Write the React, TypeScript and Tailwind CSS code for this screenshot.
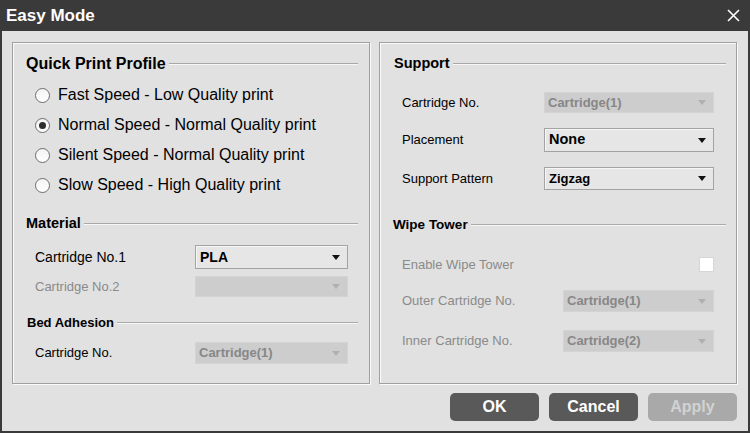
import React from "react";

const font = { fontFamily: '"Liberation Sans", Arial, sans-serif' };

function Arrow({ disabled }: { disabled?: boolean }) {
	return (
		<svg width="8" height="5" viewBox="0 0 8 5" className="shrink-0">
			<path d="M0 0 L8 0 L4 5 Z" fill={disabled ? "#b0b0b0" : "#111"} />
		</svg>
	);
}

function Select({ value, disabled, w, h, size = "text-[13px]" }: { value: string; disabled?: boolean; w: string; h: string; size?: string }) {
	if (disabled) {
		return (
			<div className={`${w} ${h} flex items-center justify-between bg-[#cdcdcd] pl-[4px] pr-[8px] shadow-[inset_0_0_0_1px_#d3d3d3]`}>
				<span className={`${size} font-bold text-[#878787]`}>{value}</span>
				<Arrow disabled />
			</div>
		);
	}
	return (
		<div className={`${w} ${h} flex items-center justify-between bg-[#e6e6e6] border border-[#a3a3a3] shadow-[inset_1px_1px_0_#f6f6f6] pl-[4px] pr-[7px]`}>
			<span className={`${size} font-bold text-black`}>{value}</span>
			<Arrow />
		</div>
	);
}

function Header({ title, size, pl }: { title: string; size: string; pl: string }) {
	return (
		<div className={`flex items-center h-[20px] ${pl}`}>
			<span className={`${size} font-bold text-black pr-[3px]`}>{title}</span>
			<div className="flex-1 h-0 border-t border-[#a9a9a9] border-b border-b-[#f7f7f7]" />
		</div>
	);
}

function Radio({ label, checked }: { label: string; checked?: boolean }) {
	return (
		<div className="flex items-center h-[30px] pl-[22px]">
			<div className="w-[15px] h-[15px] rounded-full border border-[#6d6d6d] bg-gradient-to-b from-[#f4f4f4] to-white flex items-center justify-center">
				{checked && <div className="w-[7px] h-[7px] rounded-full bg-[#2e2e2e]" />}
			</div>
			<span className="ml-[8px] text-[16px] text-black">{label}</span>
		</div>
	);
}

function Panel({ children }: { children: React.ReactNode }) {
	return <div className="w-[358px] h-[342px] border border-[#9f9f9f] shadow-[inset_1px_1px_0_#fafafa,1px_1px_0_#fafafa] flex flex-col">{children}</div>;
}

export default function App() {
	return (
		<div style={font} className="w-[750px] h-[433px] flex flex-col bg-[#e1e1e1] border-x-2 border-b-2 border-[#3a3a3a] overflow-hidden">
			{/* TITLE BAR */}
			<div className="h-[31px] shrink-0 bg-[#3a3a3a] flex items-center justify-between pl-[4px] pr-[8px]">
				<span className="text-white text-[17px] font-bold">Easy Mode</span>
				<svg width="13" height="13" viewBox="0 0 13 13">
					<path d="M1 1 L12 12 M12 1 L1 12" stroke="#fff" strokeWidth="1.6" />
				</svg>
			</div>

			<div className="flex-1 flex flex-col pt-[11px] pl-[10px]">
				<div className="flex gap-[9px]">
					{/* LEFT PANEL */}
					<Panel>
						<div className="mt-[11px] pr-[11px]">
							<Header title="Quick Print Profile" size="text-[16px]" pl="pl-[13px]" />
						</div>
						<div className="mt-[6px]">
							<Radio label="Fast Speed - Low Quality print" />
							<Radio label="Normal Speed - Normal Quality print" checked />
							<Radio label="Silent Speed - Normal Quality print" />
							<Radio label="Slow Speed - High Quality print" />
						</div>
						<div className="mt-[14px] pr-[11px]">
							<Header title="Material" size="text-[14.5px]" pl="pl-[13px]" />
						</div>
						<div className="mt-[11px] flex items-center justify-between pl-[22px] pr-[21px]">
							<span className="text-[14px] text-black">Cartridge No.1</span>
							<Select value="PLA" size="text-[14px]" w="w-[153px]" h="h-[24px]" />
						</div>
						<div className="mt-[7px] flex items-center justify-between pl-[22px] pr-[21px]">
							<span className="text-[13px] text-[#8a8a8a]">Cartridge No.2</span>
							<Select value="" disabled w="w-[153px]" h="h-[21px]" />
						</div>
						<div className="mt-[16px] pr-[11px]">
							<Header title="Bed Adhesion" size="text-[13px]" pl="pl-[14px]" />
						</div>
						<div className="mt-[9px] flex items-center justify-between pl-[22px] pr-[21px]">
							<span className="text-[13px] text-black">Cartridge No.</span>
							<Select value="Cartridge(1)" disabled w="w-[153px]" h="h-[22px]" />
						</div>
					</Panel>

					{/* RIGHT PANEL */}
					<Panel>
						<div className="mt-[11px] pr-[10px]">
							<Header title="Support" size="text-[14.5px]" pl="pl-[14px]" />
						</div>
						<div className="mt-[18px] flex items-center justify-between pl-[22px] pr-[22px]">
							<span className="text-[13px] text-black">Cartridge No.</span>
							<Select value="Cartridge(1)" disabled w="w-[170px]" h="h-[21px]" />
						</div>
						<div className="mt-[15px] flex items-center justify-between pl-[22px] pr-[22px]">
							<span className="text-[13px] text-black">Placement</span>
							<Select value="None" size="text-[14.5px]" w="w-[170px]" h="h-[24px]" />
						</div>
						<div className="mt-[15px] flex items-center justify-between pl-[22px] pr-[22px]">
							<span className="text-[13px] text-black">Support Pattern</span>
							<Select value="Zigzag" w="w-[170px]" h="h-[23px]" />
						</div>
						<div className="mt-[25px] pr-[10px]">
							<Header title="Wipe Tower" size="text-[13.5px]" pl="pl-[13px]" />
						</div>
						<div className="mt-[22px] flex items-center justify-between pl-[22px] pr-[22px] h-[15px]">
							<span className="text-[13px] text-[#8a8a8a]">Enable Wipe Tower</span>
							<div className="w-[15px] h-[15px] bg-white border border-[#d6d6d6]" />
						</div>
						<div className="mt-[18px] flex items-center justify-between pl-[22px] pr-[22px]">
							<span className="text-[13px] text-[#8a8a8a]">Outer Cartridge No.</span>
							<Select value="Cartridge(1)" disabled w="w-[151px]" h="h-[22px]" />
						</div>
						<div className="mt-[18px] flex items-center justify-between pl-[22px] pr-[22px]">
							<span className="text-[13px] text-[#8a8a8a]">Inner Cartridge No.</span>
							<Select value="Cartridge(2)" disabled w="w-[151px]" h="h-[22px]" />
						</div>
					</Panel>
				</div>

				{/* BUTTONS */}
				<div className="mt-[9px] flex justify-end gap-[10px] pr-[11px]">
					<button className="w-[89px] h-[28px] rounded-[5px] bg-[#595959] text-white text-[16px] font-bold">OK</button>
					<button className="w-[89px] h-[28px] rounded-[5px] bg-[#595959] text-white text-[16px] font-bold">Cancel</button>
					<button className="w-[89px] h-[28px] rounded-[5px] bg-[#a9a9a9] text-[#d2d2d2] text-[16px] font-bold">Apply</button>
				</div>
			</div>
		</div>
	);
}
